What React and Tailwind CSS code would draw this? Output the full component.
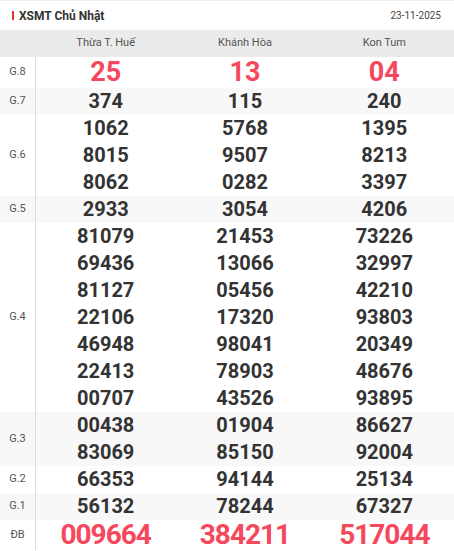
const provinces = ['Thừa T. Huế', 'Khánh Hòa', 'Kon Tum']

const prizes = [
  { label: 'G.8', big: true, rows: [['25', '13', '04']] },
  { label: 'G.7', rows: [['374', '115', '240']] },
  {
    label: 'G.6',
    rows: [
      ['1062', '5768', '1395'],
      ['8015', '9507', '8213'],
      ['8062', '0282', '3397'],
    ],
  },
  { label: 'G.5', rows: [['2933', '3054', '4206']] },
  {
    label: 'G.4',
    rows: [
      ['81079', '21453', '73226'],
      ['69436', '13066', '32997'],
      ['81127', '05456', '42210'],
      ['22106', '17320', '93803'],
      ['46948', '98041', '20349'],
      ['22413', '78903', '48676'],
      ['00707', '43526', '93895'],
    ],
  },
  {
    label: 'G.3',
    rows: [
      ['00438', '01904', '86627'],
      ['83069', '85150', '92004'],
    ],
  },
  { label: 'G.2', rows: [['66353', '94144', '25134']] },
  { label: 'G.1', rows: [['56132', '78244', '67327']] },
  { label: 'ĐB', special: true, rows: [['009664', '384211', '517044']] },
]

function PrizeRow({ prize, index }) {
  const shaded = index % 2 === 1
  return (
    <div className={`flex ${shaded ? 'bg-[#f8f8f8]' : 'bg-white'}`}>
      <div className="w-[36px] shrink-0 border-r border-[#dddddd] flex items-center justify-center text-[11px] text-[#555]">
        {prize.label}
      </div>
      <div className="flex-1">
        {prize.rows.map((row, i) => (
          <div key={i} className="grid grid-cols-3">
            {row.map((n, j) => {
              let cls = 'h-[27px] leading-[27px] text-[20px] font-bold text-[#333]'
              if (prize.big) cls = 'h-[31px] leading-[31px] text-[27px] font-bold text-[#f5485c]'
              if (prize.special)
                cls = 'h-[30px] leading-[30px] text-[28px] font-bold tracking-[-1px] text-[#f5485c]'
              return (
                <div key={j} className={`text-center ${cls}`}>
                  {n}
                </div>
              )
            })}
          </div>
        ))}
      </div>
    </div>
  )
}

export default function App() {
  return (
    <div className="w-[454px] h-[551px] overflow-hidden bg-white font-['Roboto',sans-serif] border-t border-[#eeeeee]">
      <div className="h-[29px] flex items-center justify-between pl-[12px] pr-[13px]">
        <div className="flex items-center gap-[5px]">
          <span className="w-[2px] h-[9px] bg-[#e8303f]" />
          <span className="text-[12px] font-bold text-[#333]">XSMT Chủ Nhật</span>
        </div>
        <span className="text-[10px] text-[#444]">23-11-2025</span>
      </div>
      <div className="flex h-[27px] bg-[#ebebeb] text-[11px] text-[#555]">
        <div className="w-[36px] shrink-0" />
        <div className="flex-1 grid grid-cols-3 items-center">
          {provinces.map((p) => (
            <div key={p} className="text-center">
              {p}
            </div>
          ))}
        </div>
      </div>
      {prizes.map((p, i) => (
        <PrizeRow key={p.label} prize={p} index={i} />
      ))}
    </div>
  )
}
